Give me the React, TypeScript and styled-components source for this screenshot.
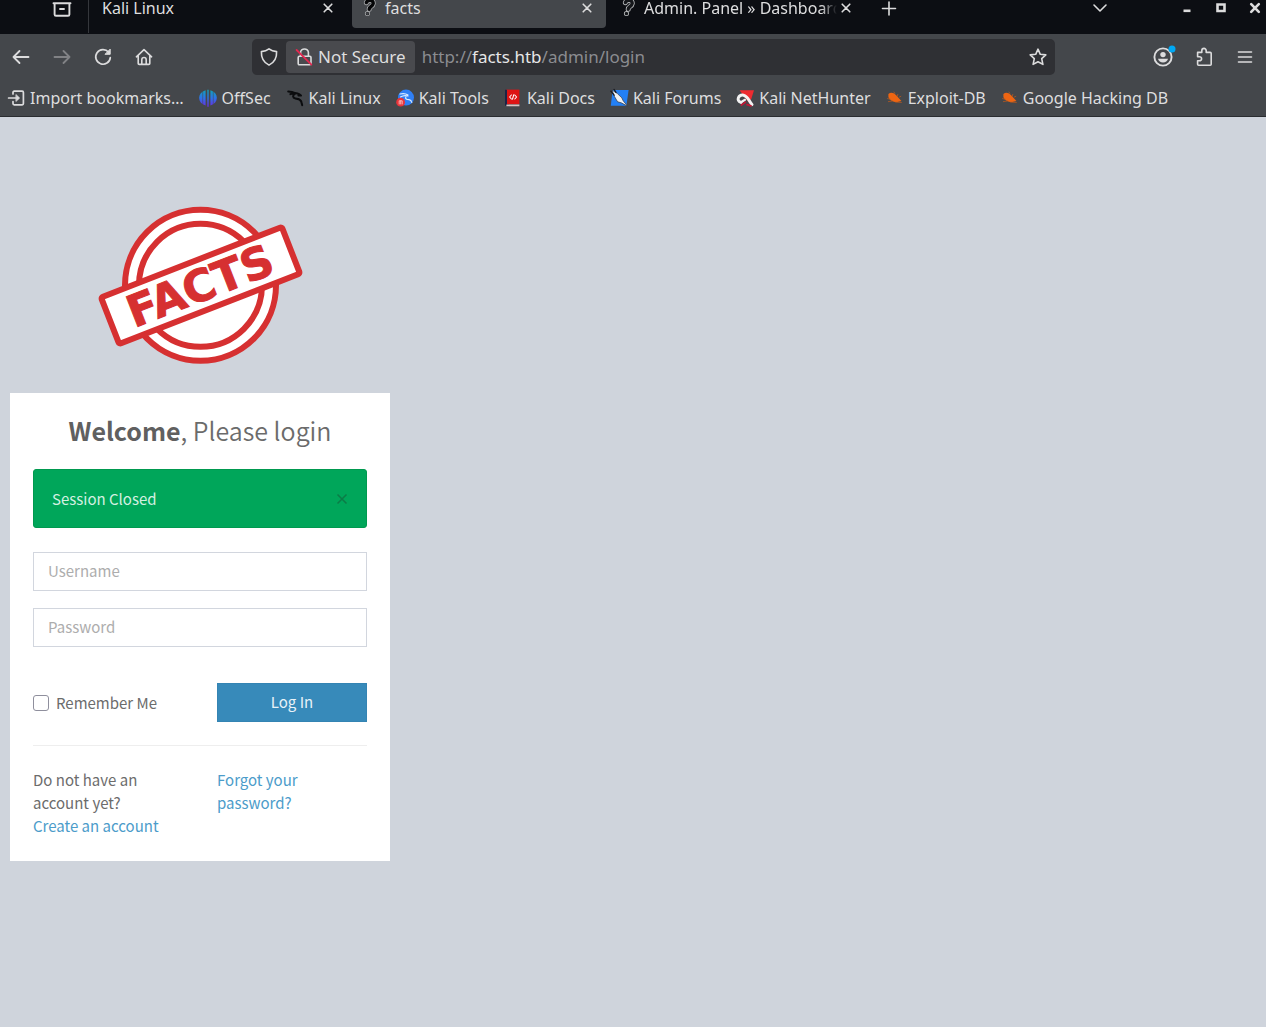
import React from "react";
import styled, { createGlobalStyle } from "styled-components";

const chromeFont = `"Noto Sans", "Open Sans", sans-serif`;
const pageFont = `"Noto Sans CJK JP", "Noto Sans CJK SC", "Open Sans", sans-serif`;

const GlobalStyle = createGlobalStyle`
  *, *::before, *::after { box-sizing: border-box; }
  body { margin: 0; background: #cfd4dc; }
  button, input { font: inherit; color: inherit; }
`;

const Window = styled.div`
  display: flex;
  flex-direction: column;
  min-height: 100vh;
  color: #dededf;
  font: 16px/24px ${chromeFont};
`;

/* ---------- Tab strip ---------- */

const TabStrip = styled.header`
  display: flex;
  align-items: flex-start;
  height: 34px;
  background: #0c0e13;
`;

const StripButton = styled.button<{ $width: number }>`
  display: flex;
  align-items: center;
  justify-content: center;
  width: ${(p) => p.$width}px;
  height: 17px;
  padding: 0;
  border: 0;
  background: none;
  flex: none;
`;

const PinnedArea = styled.div`
  display: flex;
  height: 33px;
  padding-left: 36px;
  border-right: 1px solid #35373c;
`;

const Tabs = styled.nav`
  display: flex;
  gap: 5px;
  margin-left: 4px;
`;

const Tab = styled.div<{ $active?: boolean }>`
  display: flex;
  align-items: flex-start;
  width: 254px;
  height: 28px;
  padding: 0 10px 0 9px;
  border-radius: 0 0 4px 4px;
  background: ${(p) => (p.$active ? "#44474b" : "transparent")};
`;

const TabIcon = styled.span`
  display: flex;
  width: 18px;
  height: 17px;
  margin-right: 6px;
  flex: none;
`;

const TabTitle = styled.span<{ $fade?: boolean }>`
  flex: 1;
  min-width: 0;
  height: 28px;
  line-height: 17px;
  white-space: nowrap;
  overflow: ${(p) => (p.$fade ? "hidden" : "visible")};
  mask-image: ${(p) => (p.$fade ? "linear-gradient(to left, transparent, #000 16px)" : "none")};
`;

const Spacer = styled.div`
  flex: 1;
`;

const WindowControls = styled.div`
  display: flex;
  margin-left: 53px;
  margin-right: -6px;
`;

/* ---------- Navigation toolbar ---------- */

const Toolbar = styled.div`
  display: flex;
  align-items: center;
  height: 46px;
  padding-right: 1px;
  background: #44474b;
`;

const ToolButton = styled.button<{ $dim?: boolean }>`
  display: flex;
  align-items: center;
  justify-content: center;
  width: 41px;
  height: 36px;
  padding: 0;
  border: 0;
  background: none;
  opacity: ${(p) => (p.$dim ? 0.4 : 1)};
`;

const AddressBar = styled.div`
  display: flex;
  align-items: center;
  flex: 1;
  min-width: 0;
  height: 36px;
  margin: 0 87px 0 88px;
  border-radius: 5px;
  background: #2f3034;
  font-size: 17px;
`;

const AddressButton = styled.button`
  display: flex;
  align-items: center;
  justify-content: center;
  width: 34px;
  height: 32px;
  padding: 0;
  border: 0;
  background: none;
`;

const SecurityChip = styled.button`
  display: flex;
  align-items: center;
  gap: 5px;
  height: 32px;
  padding: 0 9px;
  border: 0;
  border-radius: 4px;
  background: #494a4e;
  white-space: nowrap;
`;

const Address = styled.div`
  flex: 1;
  min-width: 0;
  margin-left: 7px;
  overflow: hidden;
  white-space: nowrap;
  color: #8b8c90;
  outline: none;
`;

const Host = styled.span`
  color: #e6e6e7;
`;

/* ---------- Bookmarks ---------- */

const Bookmarks = styled.nav`
  display: flex;
  align-items: center;
  gap: 15px;
  height: 37px;
  padding: 0 7px;
  border-bottom: 1px solid #2a2c30;
  background: #44474b;
  overflow: hidden;
`;

const Bookmark = styled.a`
  display: flex;
  align-items: center;
  gap: 5px;
  color: inherit;
  text-decoration: none;
  white-space: nowrap;
`;

/* ---------- Login page ---------- */

const Page = styled.main`
  flex: 1;
  padding: 86px 10px 40px;
  color: #6c6c6c;
  font: 400 15px/23px ${pageFont};
`;

const LoginBox = styled.div`
  width: 380px;
  max-width: 100%;
`;

const LogoLink = styled.a`
  display: flex;
  justify-content: center;
  margin-bottom: 25px;
`;

const Card = styled.section`
  padding: 18px 23px 24px;
  background: #fff;
`;

const Heading = styled.h1`
  margin: 0 0 20px;
  color: #6b6b6b;
  font-size: 25px;
  font-weight: 350;
  line-height: 38px;
  text-align: center;

  strong {
    font-weight: 700;
    color: #606060;
  }
`;

const Alert = styled.div`
  display: flex;
  align-items: center;
  justify-content: space-between;
  height: 59px;
  margin-bottom: 24px;
  padding: 0 18px;
  border: 1px solid #00994f;
  border-radius: 3px;
  background: #00a65a;
  color: #d4f0e1;
`;

const AlertClose = styled.button`
  display: flex;
  padding: 0;
  border: 0;
  background: none;
`;

const Field = styled.input`
  display: block;
  width: 100%;
  height: 39px;
  margin-bottom: 17px;
  padding: 0 14px 2px;
  border: 1px solid #d2d6de;
  border-radius: 0;
  background: #fff;
  outline: none;

  &::placeholder {
    color: #adadad;
    opacity: 1;
  }
`;

const Columns = styled.div`
  display: grid;
  grid-template-columns: 1fr 150px;
  column-gap: 34px;
`;

const SubmitRow = styled(Columns)`
  align-items: center;
  margin-top: 36px;
`;

const Remember = styled.label`
  display: flex;
  align-items: center;
  gap: 7px;
`;

const Checkbox = styled.input`
  appearance: none;
  width: 16px;
  height: 16px;
  margin: 0;
  border: 1px solid #8f8f9d;
  border-radius: 3px;
  background: #fff;

  &:checked {
    background: #3c8dbc;
  }
`;

const Submit = styled.button`
  height: 39px;
  padding: 0 0 2px;
  border: 1px solid #3484b3;
  background: #378aba;
  color: #e8f2f8;
`;

const Divider = styled.hr`
  margin: 23px 0 22px;
  border: 0;
  border-top: 1px solid #eee;
`;

const Text = styled.p`
  margin: 0;
`;

const TextLink = styled.a`
  color: #4c9cca;
  text-decoration: none;
`;

/* ---------- Icons ---------- */

const IconSvg = styled.svg`
  flex: none;
  overflow: visible;
`;

const Svg = ({ w = 18, h = w, children }: { w?: number; h?: number; children: React.ReactNode }) => (
  <IconSvg
    width={w}
    height={h}
    viewBox={`0 0 ${w} ${h}`}
    fill="none"
    stroke="#dcdcdd"
    strokeWidth={1.6}
    strokeLinecap="round"
    strokeLinejoin="round"
    aria-hidden="true"
  >
    {children}
  </IconSvg>
);

const Cross = ({ bold = false }: { bold?: boolean }) => (
  <Svg w={18} h={17}>
    <path d="M5.2 4.2l7.6 7.6M12.8 4.2l-7.6 7.6" strokeWidth={bold ? 2.6 : 1.6} />
  </Svg>
);

const questionPath = "M5.400 2.600C6.600-.4 12.600-.6 12.200 3.600 11.800 6.800 8.200 6.200 8.200 9.200M6.400 13.600h.1";

const QuestionIcon = ({ dark = false }: { dark?: boolean }) => (
  <Svg w={18} h={17}>
    <path d={questionPath} stroke={dark ? "#a4a6a8" : "#b9bbbd"} strokeWidth={5} />
    <path d={questionPath} stroke={dark ? "#050607" : "#15171b"} strokeWidth={3.4} />
    <circle cx="6.400" cy="13.600" r="1.400" fill={dark ? "#44474b" : "#15171b"} stroke="none" />
  </Svg>
);

const OffSecIcon = () => (
  <Svg>
    <defs>
      <linearGradient id="offsec" x1="0" y1="0" x2="0" y2="1">
        <stop offset="0" stopColor="#0fa3b8" />
        <stop offset="0.5" stopColor="#2f72e8" />
        <stop offset="1" stopColor="#6a2be0" />
      </linearGradient>
    </defs>
    <path
      d="M6.600 1.200v15.200C-2 14-2 3.600 6.600 1.200zM8.300.8h1.400v17H8.300zM11.400 1.200v15.200c8.600-2.400 8.600-12.800 0-15.200z"
      fill="url(#offsec)"
      stroke="none"
    />
    <path d="M3.700 2v13.600M14.300 2v13.600" stroke="#44474b" strokeWidth={0.500} />
  </Svg>
);

const KaliIcon = () => (
  <Svg>
    <path
      d="M2.200 2.400c2.600 0 5 .6 7 1.800M4.400 5.200c1.600-.8 3-.8 4.600-.4M9 4c1.800.2 3.200.6 4.600 1.400l1.400 1.200-2.600-.2M9 4.800C6.200 6 6.600 9 9.400 9.400c3 .4 5.600.8 6 3.600M12.800 10c2.200 1.400 3 3.200 3.400 6.200"
      stroke="#0b0c0e"
      strokeWidth={2}
    />
  </Svg>
);

const ToolsIcon = () => (
  <Svg>
    <circle cx="10" cy="8.600" r="8" fill="#2f7ff5" stroke="none" />
    <path d="M4 5c3-.8 6-.4 8 1M4.500 8c2.500-1.600 5-1.800 7.500-1M10 7.500c-1.500 2.500 1 3 3 3.200 1.500.2 2.500 1.200 2.800 2.800" stroke="#dcebff" strokeWidth={1.200} />
    <circle cx="4.600" cy="13.200" r="4.400" fill="#e8343a" stroke="none" />
    <path d="M3.200 15v-3.200h3V15M4.700 12v3" stroke="#ffd0d0" strokeWidth={0.800} />
  </Svg>
);

const DocsIcon = () => (
  <Svg>
    <path d="M2 .6h13.400v14.600H2z" fill="#dd1414" stroke="none" />
    <path d="M1 .8h2v16H1z" fill="#1b2547" stroke="none" />
    <path d="M2.400 15.600h13v1.600h-13z" fill="#d9c4c4" stroke="none" />
    <path d="M7.400 6L5.600 8l1.800 2M10.800 6l1.800 2-1.800 2M9.700 5.800l-1.200 4.400" stroke="#fff" strokeWidth={1.100} />
  </Svg>
);

const ForumsIcon = () => (
  <Svg>
    <path d="M2.600 1h16l-2.200 15.800H.8z" fill="#2380f5" stroke="none" />
    <path d="M2.200 1.200l5.200 3.400 4.400 4.200 1.400 3 4.400 5.400-6.400-3.400-3.600-1-3-5z" fill="#eef1f4" stroke="#30343c" strokeWidth={0.700} />
    <path d="M.8 2.200l3.400 4M4 .4l2 3" stroke="#17191e" strokeWidth={1.200} />
  </Svg>
);

const NetHunterIcon = () => (
  <Svg>
    <path d="M3.600 1.200H18l-2.600 8.400-2.600 4-4-5z" fill="#ee2b30" stroke="none" />
    <path d="M5 13.400C-.4 11.400 2.600 5.400 7.600 6.200c4 .8 5 5 8.400 9.400" stroke="#f3f3f3" strokeWidth={3} />
    <path d="M5 13.200l4-2.400" stroke="#f3f3f3" strokeWidth={2.200} />
    <path d="M5.400 16l4-2.800M11 15.600l4 1.200" stroke="#c01734" strokeWidth={1.800} />
  </Svg>
);

const ExploitIcon = () => (
  <Svg w={17} h={18}>
    <path d="M2.400 5c2.600-2.400 6-1 8 1.600l5 5.400-4 1c-4 .2-7.800-1.400-9-5z" fill="#ee6512" stroke="none" />
    <path d="M1.600 9.600l2.600.6M2.400 12.600l4-.6M8 3l.8 1.400M11.800 5.400l-.4 1.800M13.400 8l1.400-.6M9.600 13.200l5.800.2" stroke="#b4581f" strokeWidth={0.800} />
  </Svg>
);

const ImportIcon = () => (
  <Svg>
    <path d="M6 5V3.400c0-.8.400-1.200 1.200-1.200h8c.8 0 1.200.4 1.200 1.200v11.200c0 .8-.4 1.200-1.200 1.200h-8c-.8 0-1.200-.4-1.200-1.200V12.600M1.600 9h9" strokeWidth={1.700} />
    <path d="M9.200 5.800L12.600 9l-3.400 3.200z" fill="#dcdcdd" strokeWidth={0.800} />
  </Svg>
);

const FactsLogo = () => (
  <svg width="208" height="165" viewBox="0 0 208 165" role="img" aria-label="Facts">
    <g fill="#fff" stroke="#d63031">
      <circle cx="104.500" cy="82.300" r="75.500" strokeWidth="6" />
      <circle cx="104.500" cy="82.300" r="61.500" strokeWidth="6" />
    </g>
    <g transform="rotate(-21.300 104.500 82.500)">
      <rect x="7.500" y="57.500" width="194" height="50" rx="2" fill="#fff" stroke="#d63031" strokeWidth="6" />
      <text
        x="104"
        y="98"
        textAnchor="middle"
        fontFamily="'DejaVu Sans', 'Liberation Sans', sans-serif"
        fontWeight="700"
        fontSize="44"
        fill="#d63031"
        stroke="#d63031"
        strokeWidth="1"
      >
        FACTS
      </text>
    </g>
  </svg>
);

const bookmarks: { label: string; icon: React.ReactNode }[] = [
  { label: "Import bookmarks…", icon: <ImportIcon /> },
  { label: "OffSec", icon: <OffSecIcon /> },
  { label: "Kali Linux", icon: <KaliIcon /> },
  { label: "Kali Tools", icon: <ToolsIcon /> },
  { label: "Kali Docs", icon: <DocsIcon /> },
  { label: "Kali Forums", icon: <ForumsIcon /> },
  { label: "Kali NetHunter", icon: <NetHunterIcon /> },
  { label: "Exploit-DB", icon: <ExploitIcon /> },
  { label: "Google Hacking DB", icon: <ExploitIcon /> },
];

const tabs: { title: string; icon?: React.ReactNode; active?: boolean; fade?: boolean }[] = [
  { title: "Kali Linux" },
  { title: "facts", icon: <QuestionIcon dark />, active: true },
  { title: "Admin. Panel » Dashboard", icon: <QuestionIcon />, fade: true },
];

export default function App() {
  return (
    <Window>
      <GlobalStyle />
      <TabStrip>
        <PinnedArea>
          <StripButton $width={52} aria-label="Recent browsing">
            <Svg w={20} h={17}>
              <path d="M4.500-1h11M1.500 3.200h17M2.600 3.400v11c0 .8.600 1.400 1.400 1.400h12c.8 0 1.400-.6 1.400-1.400v-11M8 9h4" strokeWidth={1.900} />
            </Svg>
          </StripButton>
        </PinnedArea>
        <Tabs>
          {tabs.map((tab) => (
            <Tab key={tab.title} $active={tab.active}>
              {tab.icon && <TabIcon>{tab.icon}</TabIcon>}
              <TabTitle $fade={tab.fade}>{tab.title}</TabTitle>
              <StripButton $width={18} aria-label="Close tab">
                <Cross />
              </StripButton>
            </Tab>
          ))}
        </Tabs>
        <StripButton $width={48} aria-label="New tab">
          <Svg w={18} h={17}>
            <path d="M9 2v13M2.500 8.500h13" />
          </Svg>
        </StripButton>
        <Spacer />
        <StripButton $width={34} aria-label="List all tabs">
          <Svg w={18} h={17}>
            <path d="M3 5l6 6 6-6" />
          </Svg>
        </StripButton>
        <WindowControls>
          <StripButton $width={34} aria-label="Minimize">
            <Svg w={18} h={17}>
              <path d="M5.500 10.800h7" strokeWidth={2.600} strokeLinecap="butt" />
            </Svg>
          </StripButton>
          <StripButton $width={34} aria-label="Maximize">
            <Svg w={18} h={17}>
              <path d="M5.500 4.500h7v6.500h-7z" strokeWidth={2.600} strokeLinejoin="miter" />
            </Svg>
          </StripButton>
          <StripButton $width={34} aria-label="Close window">
            <Cross bold />
          </StripButton>
        </WindowControls>
      </TabStrip>

      <Toolbar>
        <ToolButton aria-label="Back">
          <Svg>
            <path d="M1.500 9h15M7.500 3l-6 6 6 6" strokeWidth={1.800} />
          </Svg>
        </ToolButton>
        <ToolButton $dim aria-label="Forward">
          <Svg>
            <path d="M1.500 9h15M10.500 3l6 6-6 6" strokeWidth={1.800} />
          </Svg>
        </ToolButton>
        <ToolButton aria-label="Reload">
          <Svg>
            <path d="M14.600 4.200A7.300 7.300 0 1 0 16.300 9.600" strokeWidth={1.700} />
            <path d="M16.200 1.500v4.800h-4.800z" fill="#dcdcdd" strokeWidth={1} />
          </Svg>
        </ToolButton>
        <ToolButton aria-label="Home">
          <Svg>
            <path d="M1.400 8.800L9 1.600l7.600 7.200M3.200 7.400v8c0 .6.400 1 1 1h9.600c.6 0 1-.4 1-1v-8M6.800 16v-4.200c0-3 4.400-3 4.400 0V16" />
          </Svg>
        </ToolButton>

        <AddressBar>
          <AddressButton aria-label="Tracking protection">
            <Svg>
              <path d="M9 .9c2 1.600 4.600 2.500 7.600 2.700.3 6.200-2.400 11-7.600 13.500C3.800 14.600 1.100 9.800 1.400 3.600 4.400 3.400 7 2.500 9 .9z" />
            </Svg>
          </AddressButton>
          <SecurityChip>
            <Svg>
              <path d="M4.400 8.200h10.400c.8 0 1.200.4 1.200 1.200v6.200c0 .8-.4 1.200-1.200 1.200H4.400c-.8 0-1.200-.4-1.200-1.200V9.400c0-.8.400-1.200 1.200-1.200zM5.600 8V4.600C5.600-.2 13.400-.2 13.400 4.600V8" />
              <path d="M1.600 2l14.800 14.600" stroke="#e22850" strokeWidth={1.800} />
            </Svg>
            Not Secure
          </SecurityChip>
          <Address role="textbox" aria-label="Address" contentEditable suppressContentEditableWarning spellCheck={false}>
            http://<Host>facts.htb</Host>/admin/login
          </Address>
          <AddressButton aria-label="Bookmark this page">
            <Svg>
              <path d="M9 1.200l2.300 5.100 5.500.6-4.100 3.800 1.200 5.700L9 13.700l-4.900 2.700 1.200-5.700L1.200 6.900l5.500-.6z" />
            </Svg>
          </AddressButton>
        </AddressBar>

        <ToolButton aria-label="Account">
          <Svg w={24} h={26}>
            <circle cx="12" cy="13" r="8.600" strokeWidth={1.900} />
            <circle cx="12" cy="10.600" r="2.700" fill="#dcdcdd" stroke="none" />
            <path d="M7 14.800h10c-.4 2.400-2.600 3.800-5 3.800s-4.600-1.400-5-3.800z" fill="#dcdcdd" stroke="none" />
            <circle cx="21" cy="5" r="3.500" fill="#00a8f3" stroke="none" />
          </Svg>
        </ToolButton>
        <ToolButton aria-label="Extensions">
          <Svg w={18} h={20}>
            <path d="M2.600 5.400h4.200V3.800c0-3.200 4.400-3.200 4.400 0v1.600h4c.6 0 1 .4 1 1v10.800c0 .6-.4 1-1 1H3.600c-.6 0-1-.4-1-1v-3.400h1.600c3.200 0 3.200-4 0-4H2.600z" />
          </Svg>
        </ToolButton>
        <ToolButton aria-label="Open application menu">
          <Svg>
            <path d="M2.500 4h13M2.500 9h13M2.500 14h13" />
          </Svg>
        </ToolButton>
      </Toolbar>

      <Bookmarks aria-label="Bookmarks">
        {bookmarks.map((b) => (
          <Bookmark key={b.label} href="#">
            {b.icon}
            {b.label}
          </Bookmark>
        ))}
      </Bookmarks>

      <Page>
        <LoginBox>
          <LogoLink href="#">
            <FactsLogo />
          </LogoLink>
          <Card>
            <Heading>
              <strong>Welcome</strong>, Please login
            </Heading>
            <Alert role="status">
              Session Closed
              <AlertClose aria-label="Dismiss">
                <svg width="12" height="12" viewBox="0 0 12 12" stroke="#0b7c47" strokeWidth="1.500" aria-hidden="true">
                  <path d="M1.500 1.500l9 9M10.500 1.500l-9 9" />
                </svg>
              </AlertClose>
            </Alert>
            <form onSubmit={(e) => e.preventDefault()}>
              <Field type="text" placeholder="Username" aria-label="Username" />
              <Field type="password" placeholder="Password" aria-label="Password" />
              <SubmitRow>
                <Remember>
                  <Checkbox type="checkbox" />
                  Remember Me
                </Remember>
                <Submit type="submit">Log In</Submit>
              </SubmitRow>
            </form>
            <Divider />
            <Columns>
              <Text>
                Do not have an account yet?
                <br />
                <TextLink href="#">Create an account</TextLink>
              </Text>
              <Text>
                <TextLink href="#">
                  Forgot your
                  <br />
                  password?
                </TextLink>
              </Text>
            </Columns>
          </Card>
        </LoginBox>
      </Page>
    </Window>
  );
}
